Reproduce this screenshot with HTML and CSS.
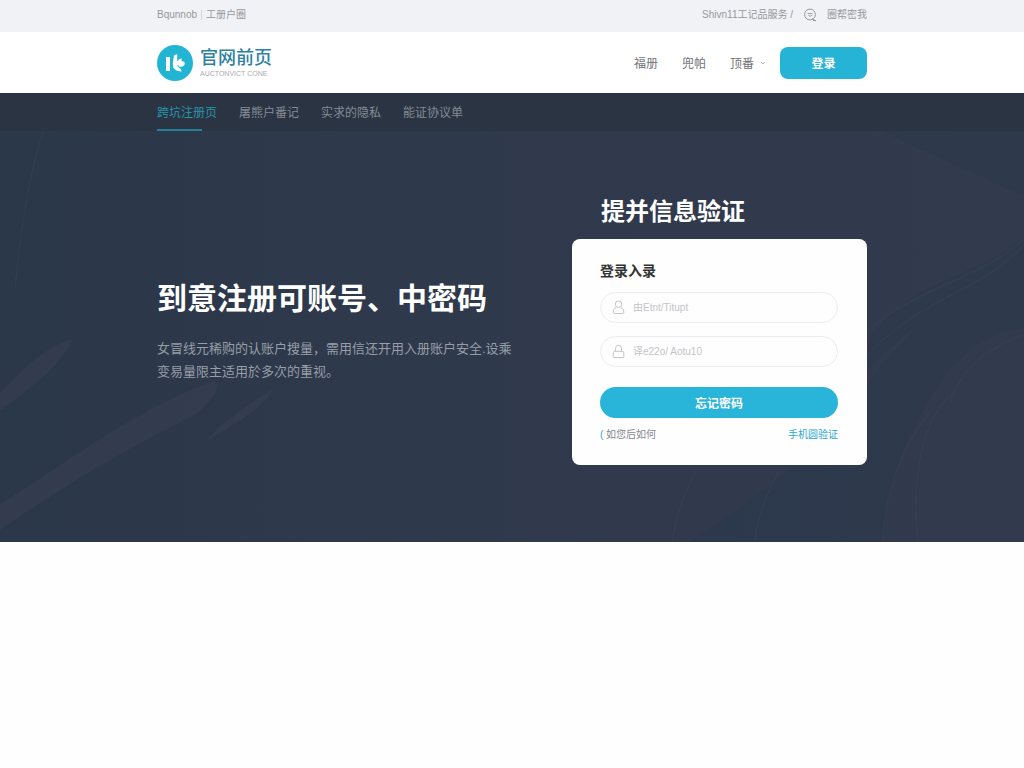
FILE: index.html
```html
<!DOCTYPE html>
<html lang="zh-CN">
<head>
<meta charset="utf-8">
<meta name="viewport" content="width=device-width, initial-scale=1">
<title>官网首页</title>
<link rel="stylesheet" href="styles.css">
</head>
<body>
<div class="topbar">
  <div class="container topbar-inner">
    <div class="topbar-group"><span>Bqunnob</span><span class="divider"></span><span>工册户圈</span></div>
    <div class="topbar-group topbar-right">
      <a href="#">Shivn11工记品服务 /</a>
      <svg class="search-icon" viewBox="0 0 14 14" aria-hidden="true"><circle cx="7" cy="6.5" r="5.4"/><path d="M4.6 5.6h4.800M9.400 6.800c-1 1.600-3 1.600-4 .6M9.300 10.300l3 2.600M10 12.500h3"/></svg>
      <a href="#">圈帮密我</a>
    </div>
  </div>
</div>
<header class="header">
  <div class="container header-inner">
    <a class="brand" href="#">
      <svg class="brand-mark" viewBox="0 0 36 36" aria-hidden="true"><circle cx="18" cy="18" r="18" fill="#22b5d3"/><path fill="#fff" d="M9 12h4v14H9zM17 10.500l3.200-1.500v7.200l2.400-2.200 1.800-.8.400 3.200c1.600-.2 3 .6 3 2 0 1.800-2 3.600-4 3.400-1.400 0-2.200-.8-2.800-1.800l-1 .8 3.200 2.600c1 .8 1.400 2 1.200 3-3.200.2-6.200-1-8.200-3.800l-.4-4.400z"/></svg>
      <span class="brand-text"><span class="brand-name">官网前页</span><span class="brand-sub">AUCTONVICT CONE</span></span>
    </a>
    <nav class="header-nav" aria-label="主导航">
      <a href="#">福册</a>
      <a href="#">兜帕</a>
      <a class="has-menu" href="#">顶番<svg class="chevron" viewBox="0 0 6 6" aria-hidden="true"><path d="M1 2l2 2 2-2"/></svg></a>
      <button class="login" type="button">登录</button>
    </nav>
  </div>
</header>
<section class="hero">
  <svg class="hero-art" viewBox="0 0 1024 450" preserveAspectRatio="none" aria-hidden="true">
    <defs>
      <linearGradient id="base" x2="1" y2="0"><stop offset="0" stop-color="#2b384a"/><stop offset=".35" stop-color="#2e394b"/><stop offset="1" stop-color="#323b4d"/></linearGradient>
    </defs>
    <path fill="url(#base)" d="M0 0h1024v450H0z"/>
    <path class="light" d="M0 300C24 276 48 252 72 247 66 264 46 286 0 318zM0 412C60 376 130 320 210 290 224 286 218 304 196 322 130 354 60 396 0 438zM205 350c20-24 48-40 70-55-14 24-44 38-70 55z"/>
    <path class="dark" d="M868 250C910 184 970 190 1024 144v26C970 206 930 214 868 276zM868 290C930 210 980 190 1024 155v80c-60 10-84 50-110 100-18 34-26 72-32 115H690c60-40 120-80 178-160zM880 38l144 65V38z"/>
    <path class="line" d="M868 238c54-46 110-50 156-92M868 262c60-62 110-60 156-110M950 310c12-34 36-54 74-68M954 300c-30 22-44 84-36 150M882 450c4-50 18-96 50-132M15 195C22 130 30 70 50 20M672 450c4-26 12-48 24-72M755 450c2-26 12-48 24-72"/>
  </svg>
  <nav class="subnav" aria-label="账户导航">
    <div class="container subnav-inner">
      <a class="active" href="#" aria-current="page">跨坑注册页</a>
      <a href="#">屠熊户番记</a>
      <a href="#">实求的隐私</a>
      <a href="#">能证协议单</a>
    </div>
  </nav>
  <div class="container hero-inner">
    <div class="hero-copy">
      <h1>到意注册可账号、中密码</h1>
      <p>女冒线元稀购的认账户搜量，需用信还开用入册账户安全.设乘<br>变易量限主适用於多次的重视。</p>
    </div>
    <div class="signin">
      <h2>提并信息验证</h2>
      <form class="card">
        <h3>登录入录</h3>
        <label class="field">
          <svg viewBox="0 0 14 16" aria-hidden="true"><circle cx="7" cy="4.500" r="3.500"/><path d="M4.500 8C2.200 9 1.300 10.800 1.300 13.300q0 1.200 1.200 1.200h9q1.200 0 1.200-1.200C12.700 10.800 11.800 9 9.500 8"/></svg>
          <input type="text" aria-label="用户名" placeholder="由Etnt/Titupt">
        </label>
        <label class="field">
          <svg viewBox="0 0 14 16" aria-hidden="true"><path d="M3.800 7.500V4.500a3.200 3.200 0 0 1 6.400 0v3M2.500 7.800h9q1 0 1.100 1l.2 4.700q0 1-1 1H2.200q-1 0-1-1l.2-4.700q.1-1 1.100-1z"/></svg>
          <input type="password" aria-label="密码" placeholder="译e22o/ Aotu10">
        </label>
        <button class="submit" type="submit">忘记密码</button>
        <div class="card-links">
          <a class="muted" href="#"><span class="accent">(</span> 如您后如何</a>
          <a class="accent" href="#">手机圆验证</a>
        </div>
      </form>
    </div>
  </div>
</section>
</body>
</html>
```
FILE: styles.css
```css
* { box-sizing: border-box; }

body {
  margin: 0;
  background: #fefefe;
  color: #333;
  font-family: "Liberation Sans", "Noto Sans CJK SC", sans-serif;
  font-size: 12px;
}

a { color: inherit; text-decoration: none; }
h1, h2, h3, p { margin: 0; }
button, input { font: inherit; }

.container {
  width: calc(100% - 32px);
  max-width: 710px;
  margin: 0 auto;
}

.topbar { background: #f1f2f5; color: #96989e; font-size: 10px; }
.topbar-inner {
  display: flex;
  align-items: center;
  justify-content: space-between;
  min-height: 32px;
}
.topbar-group { display: flex; align-items: center; gap: 4px; line-height: 14px; padding-bottom: 2px; }
.topbar-right { gap: 10px; }
.divider { width: 1px; height: 10px; background: #d5d7dc; }
.search-icon { width: 14px; height: 14px; fill: none; stroke: #96989e; }

.header { background: #fff; }
.header-inner {
  display: flex;
  align-items: center;
  justify-content: space-between;
  min-height: 61px;
}
.brand { display: flex; align-items: center; gap: 7px; }
.brand-mark { width: 36px; height: 36px; }
.brand-text { display: flex; flex-direction: column; }
.brand-name { color: #2e819f; font-size: 18px; font-weight: 500; line-height: 22px; }
.brand-sub { color: #a9abb0; font-size: 7px; line-height: 10px; }

.header-nav { display: flex; align-items: center; gap: 24px; color: #707276; }
.has-menu { display: flex; align-items: center; gap: 6px; margin-right: -10px; }
.chevron { width: 6px; height: 6px; fill: none; stroke: #bbb; }
.login {
  width: 87px;
  height: 32px;
  border: 0;
  border-radius: 8px;
  background: #25b4d6;
  color: #fff;
  font-weight: 700;
}

.hero { position: relative; background: #2e394b; }
.hero-art { position: absolute; inset: 0; width: 100%; height: 100%; }
.light { fill: #384052; opacity: .6; }
.dark { fill: #29364a; opacity: .4; }
.line { fill: none; stroke: #3d4658; opacity: .5; }

.subnav { position: relative; background: #2a3443; color: #858b95; }
.subnav-inner { display: flex; flex-wrap: wrap; gap: 0 22px; }
.subnav a { padding-top: 2px; line-height: 36px; }
.subnav .active {
  background: linear-gradient(#267f96, #267f96) left bottom / 45px 2px no-repeat;
  color: #2795aa;
}

.hero-inner {
  position: relative;
  display: flex;
  flex-wrap: wrap;
  align-items: center;
  justify-content: space-between;
  gap: 32px;
  padding: 65px 0 77px;
}
.hero-copy { color: #fff; }
.hero-copy h1 { font-size: 30px; font-weight: 700; line-height: 40px; }
.hero-copy p {
  margin-top: 18px;
  color: #979da7;
  font-size: 13px;
  line-height: 23px;
}

.signin { flex: 0 1 295px; }
.signin h2 {
  padding-left: 29px;
  color: #fff;
  font-size: 24px;
  font-weight: 700;
  line-height: 32px;
}
.card {
  display: flex;
  flex-direction: column;
  margin-top: 11px;
  padding: 22px 29px 21px 28px;
  border-radius: 8px;
  background: #fefefe;
}
.card h3 { margin-bottom: 11px; color: #333; font-size: 14px; font-weight: 700; line-height: 20px; }
.field {
  display: flex;
  align-items: center;
  gap: 8px;
  height: 31px;
  margin-bottom: 13px;
  padding: 0 11px;
  border: 1px solid #ededf0;
  border-radius: 16px;
}
.field svg { flex: none; width: 13px; height: 15px; fill: none; stroke: #bfc0c3; }
.field input {
  flex: 1;
  min-width: 0;
  padding: 0;
  border: 0;
  outline: 0;
  background: transparent;
  font-size: 10px;
}
.field input::placeholder { color: #c3c4c8; opacity: 1; }
.submit {
  height: 31px;
  margin-top: 7px;
  border: 0;
  border-radius: 16px;
  background: #29b5da;
  color: #fff;
  font-weight: 700;
}
.card-links {
  display: flex;
  justify-content: space-between;
  margin-top: 8px;
  font-size: 10px;
  line-height: 18px;
}
.muted { color: #85898f; }
.accent { color: #2ea9cd; }
```
